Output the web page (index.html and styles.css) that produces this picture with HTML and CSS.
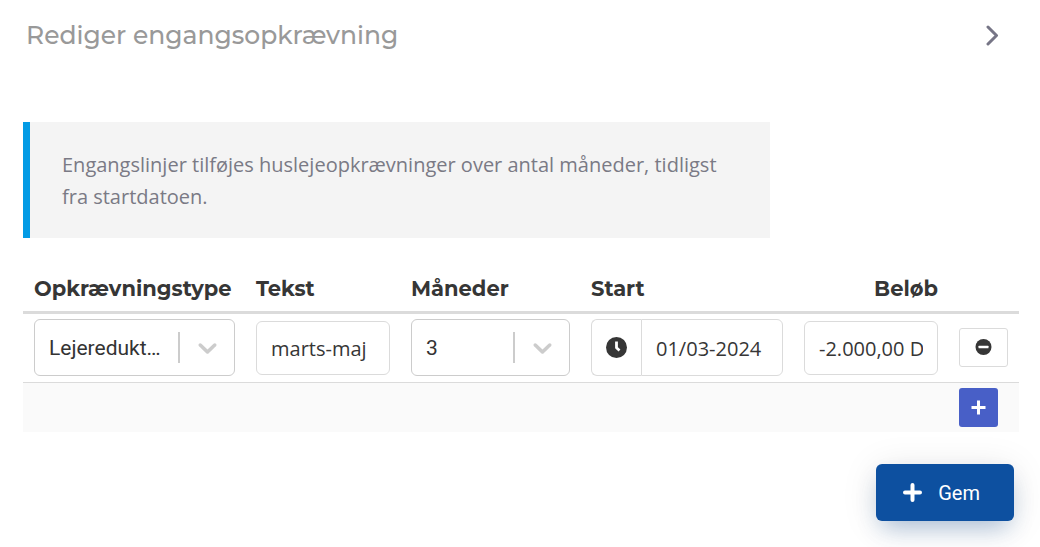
FILE: index.html
```html
<!DOCTYPE html>
<html lang="da">
<head>
  <meta charset="utf-8">
  <title>Rediger engangsopkrævning</title>
  <meta name="viewport" content="width=device-width, initial-scale=1.0">
  <link rel="stylesheet" href="styles.css">
</head>
<body>
  <header class="panel-header">
    <h1>Rediger engangsopkrævning</h1>
    <button type="button" class="close-button" aria-label="Luk">
      <svg width="14" height="22" viewBox="0 0 14 22"><path d="M2 3l8.500 8.500L2 20" /></svg>
    </button>
  </header>

  <main>
    <p class="message">Engangslinjer tilføjes huslejeopkrævninger over antal måneder, tidligst fra startdatoen.</p>

    <form>
      <table class="lines">
        <colgroup>
          <col>
          <col class="col-text">
          <col class="col-months">
          <col class="col-start">
          <col class="col-amount">
          <col class="col-action">
        </colgroup>
        <thead>
          <tr>
            <th id="type-label">Opkrævningstype</th>
            <th id="text-label">Tekst</th>
            <th id="months-label">Måneder</th>
            <th id="start-label">Start</th>
            <th id="amount-label" class="right">Beløb</th>
            <th></th>
          </tr>
        </thead>
        <tbody>
          <tr>
            <td>
              <div class="select">
                <select aria-labelledby="type-label">
                  <option>Lejeredukt…</option>
                </select>
                <span class="indicator">
                  <svg width="31" height="31" viewBox="0 0 20 20"><path d="M4.516 7.548c0.436-0.446 1.043-0.481 1.576 0l3.908 3.747 3.908-3.747c0.533-0.481 1.141-0.446 1.574 0 0.436 0.445 0.408 1.197 0 1.615-0.406 0.418-4.695 4.502-4.695 4.502-0.217 0.223-0.502 0.335-0.787 0.335s-0.570-0.112-0.789-0.335c0 0-4.287-4.084-4.695-4.502s-0.436-1.170 0-1.615z" /></svg>
                </span>
              </div>
            </td>
            <td><input class="input" type="text" value="marts-maj" aria-labelledby="text-label"></td>
            <td>
              <div class="select">
                <select aria-labelledby="months-label">
                  <option>3</option>
                </select>
                <span class="indicator">
                  <svg width="31" height="31" viewBox="0 0 20 20"><path d="M4.516 7.548c0.436-0.446 1.043-0.481 1.576 0l3.908 3.747 3.908-3.747c0.533-0.481 1.141-0.446 1.574 0 0.436 0.445 0.408 1.197 0 1.615-0.406 0.418-4.695 4.502-4.695 4.502-0.217 0.223-0.502 0.335-0.787 0.335s-0.570-0.112-0.789-0.335c0 0-4.287-4.084-4.695-4.502s-0.436-1.170 0-1.615z" /></svg>
                </span>
              </div>
            </td>
            <td>
              <div class="date">
                <span class="date-icon">
                  <svg width="21" height="21" viewBox="0 0 21 21"><circle cx="10.500" cy="10.500" r="10.500" fill="#363636" /><path d="M10.500 4.500v6.300l3 2.700" fill="none" stroke="#fff" stroke-width="2.800" stroke-linejoin="round" /></svg>
                </span>
                <input class="input" type="text" value="01/03-2024" aria-labelledby="start-label">
              </div>
            </td>
            <td><input class="input" type="text" value="-2.000,00 DKK" aria-labelledby="amount-label"></td>
            <td>
              <button type="button" class="button remove" aria-label="Fjern linje">
                <svg width="17" height="17" viewBox="0 0 17 17"><circle cx="8.500" cy="8" r="8" fill="#363636" /><rect x="3.500" y="6.700" width="10" height="2.600" rx="0.500" fill="#fff" /></svg>
              </button>
            </td>
          </tr>
        </tbody>
        <tfoot>
          <tr>
            <td colspan="5"></td>
            <td>
              <button type="button" class="button add" aria-label="Tilføj linje">
                <svg width="15" height="15" viewBox="0 0 15 15"><path d="M7.500 0.500v14M0.500 7.500h14" /></svg>
              </button>
            </td>
          </tr>
        </tfoot>
      </table>

      <div class="actions">
        <button type="submit" class="save">
          <svg width="19" height="19" viewBox="0 0 19 19"><path d="M9.500 2v15M2 9.500h15" /></svg>
          Gem
        </button>
      </div>
    </form>
  </main>
</body>
</html>
```

FILE: styles.css
```css
* {
  box-sizing: border-box;
}
body {
  margin: 0;
  background: #fff;
  color: #363636;
  font-family: "Segoe UI", "Open Sans", sans-serif;
  font-size: 20px;
}
button {
  cursor: pointer;
}
svg {
  display: block;
}
.panel-header {
  display: flex;
  align-items: center;
  justify-content: space-between;
  height: 70px;
  padding: 0 40px 0 26px;
}
.panel-header h1 {
  margin: 0;
  color: #999;
  font-family: Montserrat, Inter, sans-serif;
  font-size: 25px;
  font-weight: 500;
}
.close-button {
  padding: 0;
  border: 0;
  background: none;
}
.close-button path {
  fill: none;
  stroke: #767586;
  stroke-width: 3;
  stroke-linecap: round;
  stroke-linejoin: round;
}
main {
  padding: 52px 21px 26px 23px;
}
.message {
  width: 75%;
  margin: 0 0 36px;
  padding: 27px 32px 25px;
  border-left: 7px solid #039be5;
  background: #f4f4f4;
  color: #7a7a85;
  line-height: 32px;
}

/* invoice lines */
.lines {
  width: 100%;
  table-layout: fixed;
  border-collapse: separate;
  border-spacing: 0;
}
.col-text,
.col-amount {
  width: 155px;
}
.col-months {
  width: 180px;
}
.col-start {
  width: 213px;
}
.col-action {
  width: 71px;
}
.lines th {
  height: 40px;
  padding: 0 0 8px 11px;
  border-bottom: 3px solid #dbdbdb;
  font-family: Montserrat, Inter, sans-serif;
  font-size: 21px;
  font-weight: 700;
  line-height: 28px;
  text-align: left;
  white-space: nowrap;
}
.lines .right {
  padding-right: 10px;
  text-align: right;
}
.lines td {
  padding: 5px 10px 5px 11px;
  vertical-align: middle;
}
.lines tbody td {
  padding-bottom: 6px;
  border-bottom: 1px solid #dbdbdb;
}
.lines tfoot td {
  background: #fafafa;
}
.input {
  display: block;
  width: 100%;
  height: 54px;
  padding: 2px 14px 0;
  border: 1px solid #dbdbdb;
  border-radius: 6px;
  background: #fff;
  color: #363636;
  font-family: inherit;
  font-size: 20px;
}
.select {
  position: relative;
}
.select select {
  display: block;
  width: 100%;
  height: 57px;
  padding: 0 56px 0 14px;
  appearance: none;
  border: 1px solid #ccc;
  border-radius: 6px;
  background: #fff;
  color: #333;
  font-family: Roboto, sans-serif;
  font-size: 21px;
}
.indicator {
  position: absolute;
  top: 13px;
  right: 12px;
  height: 31px;
  padding-left: 12px;
  border-left: 2px solid #ccc;
  pointer-events: none;
}
.indicator path {
  fill: #ccc;
}
.date {
  display: flex;
  height: 57px;
}
.date-icon {
  display: flex;
  flex: none;
  align-items: center;
  justify-content: center;
  width: 50px;
  border: 1px solid #dbdbdb;
  border-right: 0;
  border-radius: 6px 0 0 6px;
}
.date .input {
  flex: 1;
  min-width: 0;
  height: 57px;
  border-radius: 0 6px 6px 0;
}
.button {
  display: flex;
  align-items: center;
  justify-content: center;
  height: 39px;
  padding: 0;
  border-radius: 3px;
}
.remove {
  width: 49px;
  border: 1px solid #dbdbdb;
  background: #fff;
}
.add {
  width: 39px;
  border: 0;
  background: #485fc7;
}
.add path {
  fill: none;
  stroke: #fff;
  stroke-width: 3;
}

.actions {
  display: flex;
  justify-content: flex-end;
  padding: 32px 5px 0 0;
}
.save {
  display: flex;
  align-items: center;
  justify-content: center;
  gap: 16px;
  height: 57px;
  padding: 0 34px 0 27px;
  border: 0;
  border-radius: 6px;
  background: #0d50a0;
  box-shadow: 0 12px 24px -6px rgba(13, 80, 160, 0.3), 0 4px 36px rgba(0, 0, 0, 0.1);
  color: #fff;
  font-family: Roboto, sans-serif;
  font-size: 20px;
}
.save path {
  fill: none;
  stroke: #fff;
  stroke-width: 4;
  stroke-linecap: round;
}
```
